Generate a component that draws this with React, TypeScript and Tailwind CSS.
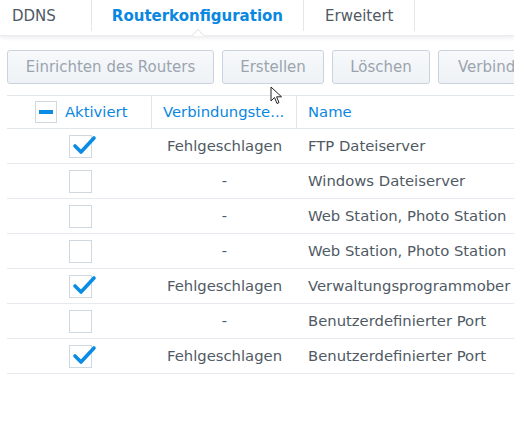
import { Fragment } from 'react'

const rows = [
  { on: true, status: 'Fehlgeschlagen', name: 'FTP Dateiserver' },
  { on: false, status: '-', name: 'Windows Dateiserver' },
  { on: false, status: '-', name: 'Web Station, Photo Station' },
  { on: false, status: '-', name: 'Web Station, Photo Station' },
  { on: true, status: 'Fehlgeschlagen', name: 'Verwaltungsprogrammober' },
  { on: false, status: '-', name: 'Benutzerdefinierter Port' },
  { on: true, status: 'Fehlgeschlagen', name: 'Benutzerdefinierter Port' },
]

function Check({ on }: { on: boolean }) {
  return (
    <div className="relative w-[23px] h-[23px] border border-[#cfd8e1] bg-white">
      {on && (
        <svg className="absolute left-[1px] top-[-4px]" width="26" height="26" viewBox="0 0 26 26">
          <path d="M4 14 L10 20 L23 6" fill="none" stroke="#0a8ce6" strokeWidth="3.6" strokeLinecap="round" strokeLinejoin="round" />
        </svg>
      )}
    </div>
  )
}

function Btn({ label, w }: { label: string; w: string }) {
  return (
    <div className={`${w} h-[34px] shrink-0 flex items-center justify-center rounded-[3px] border border-[#c9d3dd] bg-gradient-to-b from-[#f7f9fb] to-[#eef2f6] text-[#9ba4ae] whitespace-nowrap overflow-hidden`}>
      {label}
    </div>
  )
}

export default function App() {
  return (
    <div
      className="relative w-[514px] h-[421px] bg-white overflow-hidden text-[14.8px] text-[#505a64]"
      style={{ fontFamily: '"DejaVu Sans", Verdana, sans-serif' }}
    >
      {/* tabs */}
      <div className="relative h-[36px] flex items-start bg-white shadow-[0_2px_4px_rgba(0,0,0,0.08)] border-b border-[#e9edf1] text-[15px]">
        <div className="h-[31px] flex items-center pt-[2px] pl-[12px] pr-[35px] border-r border-[#e3e7eb]">DDNS</div>
        <div className="h-[31px] flex items-center pt-[2px] pl-[20px] pr-[20px] border-r border-[#e3e7eb] font-bold text-[#0a87e0]">Routerkonfiguration</div>
        <div className="h-[31px] flex items-center pt-[2px] pl-[21px] pr-[20px] border-r border-[#e3e7eb]">Erweitert</div>
        <div className="absolute left-[191px] bottom-[-1px] w-[14px] h-[7px] overflow-hidden">
          <div className="w-[10px] h-[10px] bg-white border border-[#e3e7eb] rotate-45 translate-x-[2px] translate-y-[2px]" />
        </div>
      </div>

      {/* toolbar */}
      <div className="flex gap-[8px] pl-[7px] pt-[14px] text-[15px]">
        <Btn label="Einrichten des Routers" w="w-[207px]" />
        <Btn label="Erstellen" w="w-[102px]" />
        <Btn label="Löschen" w="w-[98px]" />
        <div className="w-[110px] h-[34px] shrink-0 flex items-center pl-[19px] rounded-[3px] border border-[#c9d3dd] bg-gradient-to-b from-[#f7f9fb] to-[#eef2f6] text-[#9ba4ae] whitespace-nowrap">
          Verbind
        </div>
      </div>

      {/* table */}
      <div className="ml-[7px] mt-[11px] w-[600px]">
        <div className="h-[34px] flex items-center border-y border-[#e1e6eb] text-[#0a87e0]">
          <div className="w-[145px] h-full flex items-center gap-[8px] pl-[28px] border-r border-[#e1e6eb]">
            <div className="w-[22px] h-[22px] border border-[#cfd8e1] flex items-center justify-center">
              <div className="w-[14px] h-[4px] bg-[#0a8ce6]" />
            </div>
            Aktiviert
          </div>
          <div className="w-[145px] h-full flex items-center pl-[11px] border-r border-[#e1e6eb] whitespace-nowrap">Verbindungste...</div>
          <div className="pl-[11px]">Name</div>
        </div>
        {rows.map((r, i) => (
          <Fragment key={i}>
            <div className="h-[35px] flex items-center border-b border-[#e6eaee]">
              <div className="w-[145px] flex justify-center pl-[2px]">
                <Check on={r.on} />
              </div>
              <div className="w-[145px] text-center">{r.status}</div>
              <div className="pl-[11px] whitespace-nowrap">{r.name}</div>
            </div>
          </Fragment>
        ))}
      </div>

      {/* mouse pointer */}
      <svg className="absolute left-[270px] top-[86px]" width="14" height="20" viewBox="0 0 14 20">
        <path d="M1 1 L1 15 L4.5 11.5 L7 17.5 L9 16.6 L6.6 10.8 L11.5 10.8 Z" fill="#fff" stroke="#222" strokeWidth="1" strokeLinejoin="round" />
      </svg>
    </div>
  )
}
